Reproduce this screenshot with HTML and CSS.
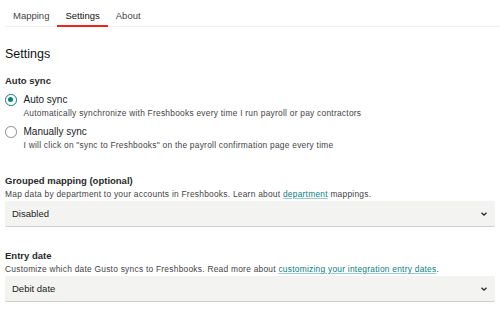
FILE: index.html
```html
<!DOCTYPE html>
<html lang="en">
<head>
    <meta charset="UTF-8">
    <meta name="viewport" content="width=device-width, initial-scale=1.0">
    <title>Freshbooks Settings</title>
    <link rel="stylesheet" href="styles.css">
</head>
<body>
    <!-- Tabs -->
    <div class="tabs">
        <a class="tab">Mapping</a>
        <a class="tab active">Settings</a>
        <a class="tab">About</a>
    </div>

    <div class="page">
        <h1>Settings</h1>

        <!-- Auto sync -->
        <div class="field">
            <div class="field-label">Auto sync</div>
            <label class="radio-row">
                <span class="radio checked"></span>
                <span class="radio-text">
                    <span class="radio-title">Auto sync</span>
                    <span class="radio-hint">Automatically synchronize with Freshbooks every time I run payroll or pay contractors</span>
                </span>
            </label>
            <label class="radio-row">
                <span class="radio"></span>
                <span class="radio-text">
                    <span class="radio-title">Manually sync</span>
                    <span class="radio-hint">I will click on "sync to Freshbooks" on the payroll confirmation page every time</span>
                </span>
            </label>
        </div>

        <!-- Grouped mapping -->
        <div class="field grouped">
            <div class="field-label">Grouped mapping (optional)</div>
            <div class="field-hint">Map data by department to your accounts in Freshbooks. Learn about <a href="#">department</a> mappings.</div>
            <div class="select">
                <span>Disabled</span>
                <svg width="8" height="6" viewBox="0 0 8 6"><path d="M1.5 1.8 L4 4.2 L6.5 1.8" fill="none" stroke="#222" stroke-width="1.3"/></svg>
            </div>
        </div>

        <!-- Entry date -->
        <div class="field entry">
            <div class="field-label">Entry date</div>
            <div class="field-hint">Customize which date Gusto syncs to Freshbooks. Read more about <a href="#">customizing your integration entry dates</a>.</div>
            <div class="select">
                <span>Debit date</span>
                <svg width="8" height="6" viewBox="0 0 8 6"><path d="M1.5 1.8 L4 4.2 L6.5 1.8" fill="none" stroke="#222" stroke-width="1.3"/></svg>
            </div>
        </div>
    </div>
</body>
</html>
```

FILE: styles.css
```css
/* Stildefinitionen */
body { font-family: "Liberation Sans", Arial, sans-serif; background-color: #fff; color: #1c1c1c; margin: 0; padding: 0; }
.tabs { display: flex; margin-left: 5px; padding-top: 10px; border-bottom: 1px solid #efefef; }
.tab { font-size: 9.5px; color: #444; padding: 0 8px 4px 8px; border-bottom: 2px solid transparent; margin-bottom: -1px; }
.tab.active { color: #111; border-bottom-color: #f2221b; }
.page { padding: 0 5px; }
h1 { font-size: 12.5px; font-weight: normal; margin: 20px 0 0 0; color: #111; }
.field { margin-top: 14px; }
.field-label { font-size: 9.5px; font-weight: bold; color: #2a2a2a; margin-bottom: 8px; }
.radio-row { display: flex; align-items: flex-start; margin-bottom: 8px; }
.radio { width: 9.5px; height: 9.5px; border: 1.3px solid #8a8a8a; border-radius: 50%; margin: 0 7px 0 0; position: relative; flex-shrink: 0; }
.radio.checked { border-color: #0a8080; }
.radio.checked::after { content: ""; position: absolute; left: 2.25px; top: 2.25px; width: 5px; height: 5px; border-radius: 50%; background-color: #0a8080; }
.radio-text { display: flex; flex-direction: column; }
.radio-title { font-size: 10px; color: #222; }
.radio-hint { font-size: 8.4px; letter-spacing: 0.25px; color: #444; margin-top: 3px; }
.grouped { margin-top: 25px; }
.entry { margin-top: 23px; }
.grouped .field-label, .entry .field-label { margin-bottom: 3px; }
.field-hint { font-size: 8.4px; letter-spacing: 0.25px; color: #444; margin-bottom: 2px; }
.field-hint a { color: #0a8080; text-decoration: underline; text-decoration-color: #9cc; }
.select { display: flex; justify-content: space-between; align-items: center; height: 25px; background-color: #f3f3f1; border-bottom: 1.5px solid #cfcfcd; border-radius: 2px; padding: 0 7px 0 7px; font-size: 9.5px; color: #222; }
```
